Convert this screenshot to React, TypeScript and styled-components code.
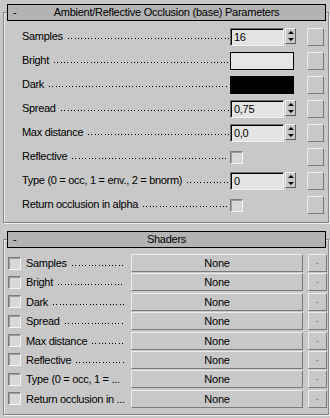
import styled, { createGlobalStyle } from "styled-components";

const GlobalStyle = createGlobalStyle`
  html, body {
    margin: 0;
    padding: 0;
    background: #c8c8c8;
  }
  body {
    font-family: "Liberation Sans", Arial, sans-serif;
    font-size: 11px;
    color: #000;
  }
`;

const Page = styled.div`
  width: 330px;
  height: 418px;
  box-sizing: border-box;
  padding: 4px 1px 0 3px;
  overflow: hidden;
`;

const Rollout = styled.section<{ $top: number }>`
  margin-top: ${(p) => p.$top}px;
`;

const RolloutHeader = styled.div`
  position: relative;
  z-index: 1;
  margin: 0 3px 0 4px;
  height: 17px;
  box-sizing: border-box;
  border: 1px solid #000;
  background: #b3b3b3;
  display: grid;
  grid-template-columns: 16px 1fr 16px;
  align-items: center;
  line-height: 15px;
  letter-spacing: -0.25px;
`;

const Toggle = styled.span`
  padding-left: 5px;
`;

const Title = styled.span`
  text-align: center;
  white-space: nowrap;
`;

const Frame = styled.div<{ $pad: string; $gap: number }>`
  margin-top: -9px;
  border: 1px solid #868686;
  box-shadow: inset 1px 1px 0 #eeeeee, 1px 1px 0 #eeeeee;
  padding: ${(p) => p.$pad};
  display: flex;
  flex-direction: column;
  gap: ${(p) => p.$gap}px;
`;

const ParamRow = styled.div`
  display: grid;
  grid-template-columns: 1fr 77px 17px;
  height: 18px;
`;

const Label = styled.div<{ $line: number }>`
  display: flex;
  overflow: hidden;
  white-space: nowrap;
  line-height: ${(p) => p.$line}px;
  height: ${(p) => p.$line}px;
  letter-spacing: -0.3px;
  min-width: 0;
`;

const LabelText = styled.span`
  flex: none;
`;

/* dotted leader drawn as 1px dots roughly every 3.3px, sitting on the baseline */
const Leader = styled.span<{ $base: number }>`
  flex: 1;
  min-width: 0;
  margin: 0 1px 0 5px;
  background-image: linear-gradient(
    to right,
    #000 0 1px,
    transparent 1px 3px,
    #000 3px 4px,
    transparent 4px 7px,
    #000 7px 8px,
    transparent 8px
  );
  background-size: 10px 1px;
  background-repeat: repeat-x;
  background-position: 0 ${(p) => p.$base}px;
`;

const Spinner = styled.div`
  display: flex;
  gap: 1px;
  align-items: flex-start;
`;

const Field = styled.div`
  width: 54px;
  height: 18px;
  box-sizing: border-box;
  border: 1px solid;
  border-color: #6e6e6e #f2f2f2 #f2f2f2 #6e6e6e;
  box-shadow: inset 1px 1px 0 #000;
  background: #e4e4e4;
  padding-left: 3px;
  line-height: 16px;
  letter-spacing: -0.3px;
`;

const Arrows = styled.div`
  width: 11px;
  height: 16px;
  box-sizing: border-box;
  display: flex;
  flex-direction: column;
  border: 1px solid;
  border-color: #f0f0f0 #5e5e5e #5e5e5e #f0f0f0;
`;

const Arrow = styled.span<{ $dir: "up" | "down" }>`
  flex: 1;
  display: flex;
  align-items: center;
  justify-content: center;
  &::before {
    content: "";
    border-left: 3px solid transparent;
    border-right: 3px solid transparent;
    ${(p) =>
      p.$dir === "up"
        ? "border-bottom: 3px solid #000;"
        : "border-top: 3px solid #000;"}
  }
`;

const Swatch = styled.div<{ $color: string }>`
  width: 64px;
  height: 18px;
  box-sizing: border-box;
  border: 1px solid #000;
  background: ${(p) => p.$color};
`;

const Check = styled.span<{ $offset?: number }>`
  display: block;
  width: 13px;
  height: 13px;
  box-sizing: border-box;
  margin-top: ${(p) => p.$offset ?? 0}px;
  border: 1px solid;
  border-color: #7c7c7c #f4f4f4 #f4f4f4 #7c7c7c;
  box-shadow: inset 1px 1px 0 #9c9c9c;
  background: #d8d8d8;
`;

const Raised = styled.div`
  box-sizing: border-box;
  height: 18px;
  border: 1px solid;
  border-color: #ececec #7a7a7a #7a7a7a #ececec;
  background: #c8c8c8;
`;

const MapButton = styled(Raised)`
  width: 17px;
`;

const ShaderRow = styled.div`
  display: grid;
  grid-template-columns: 13px 1fr 172px 19px;
  column-gap: 5px;
  align-items: center;
  height: 18px;
`;

const NoneButton = styled(Raised)`
  text-align: center;
  line-height: 16px;
  letter-spacing: -0.2px;
`;

const DashButton = styled(Raised)`
  text-align: center;
  line-height: 15px;
  color: #8c8c8c;
  font-size: 10px;
`;

type Param =
  | { label: string; kind: "spin"; value: string }
  | { label: string; kind: "color"; color: string }
  | { label: string; kind: "check" };

const params: Param[] = [
  { label: "Samples", kind: "spin", value: "16" },
  { label: "Bright", kind: "color", color: "#e6e6e6" },
  { label: "Dark", kind: "color", color: "#000" },
  { label: "Spread", kind: "spin", value: "0,75" },
  { label: "Max distance", kind: "spin", value: "0,0" },
  { label: "Reflective", kind: "check" },
  { label: "Type (0 = occ, 1 = env., 2 = bnorm)", kind: "spin", value: "0" },
  { label: "Return occlusion in alpha", kind: "check" },
];

const shaders = [
  { label: "Samples", leader: true },
  { label: "Bright", leader: true },
  { label: "Dark", leader: true },
  { label: "Spread", leader: true },
  { label: "Max distance", leader: true },
  { label: "Reflective", leader: true },
  { label: "Type (0 = occ, 1 = ...", leader: false },
  { label: "Return occlusion in ...", leader: false },
];

const Control = function ({ param }: { param: Param }) {
  if (param.kind === "spin") {
    return (
      <Spinner>
        <Field>{param.value}</Field>
        <Arrows>
          <Arrow $dir="up" />
          <Arrow $dir="down" />
        </Arrows>
      </Spinner>
    );
  }
  if (param.kind === "color") {
    return <Swatch $color={param.color} />;
  }
  return <Check $offset={3} />;
};

export default function App() {
  return (
    <Page>
      <GlobalStyle />
      <Rollout $top={0}>
        <RolloutHeader>
          <Toggle>-</Toggle>
          <Title>Ambient/Reflective Occlusion (base) Parameters</Title>
        </RolloutHeader>
        <Frame $pad="15px 4px 8px 18px" $gap={6}>
          {params.map((param) => (
            <ParamRow key={param.label}>
              <Label $line={16}>
                <LabelText>{param.label}</LabelText>
                <Leader $base={10} />
              </Label>
              <Control param={param} />
              <MapButton />
            </ParamRow>
          ))}
        </Frame>
      </Rollout>
      <Rollout $top={8}>
        <RolloutHeader>
          <Toggle>-</Toggle>
          <Title>Shaders</Title>
        </RolloutHeader>
        <Frame $pad="14px 1px 6px 4px" $gap={1.4}>
          {shaders.map((s) => (
            <ShaderRow key={s.label}>
              <Check />
              <Label $line={18}>
                <LabelText>{s.label}</LabelText>
                {s.leader && <Leader $base={11} />}
              </Label>
              <NoneButton>None</NoneButton>
              <DashButton>-</DashButton>
            </ShaderRow>
          ))}
        </Frame>
      </Rollout>
    </Page>
  );
}
